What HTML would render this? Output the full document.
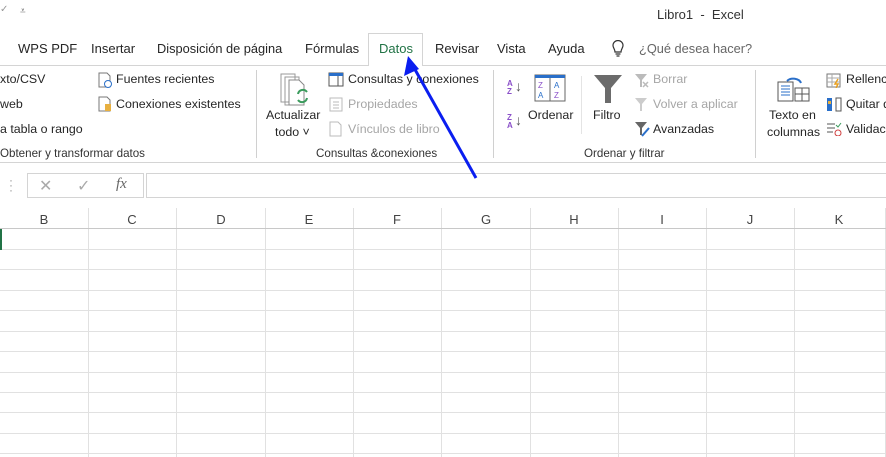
<!DOCTYPE html>
<html><head><meta charset="utf-8"><style>
*{margin:0;padding:0;box-sizing:border-box}
body{width:886px;height:457px;overflow:hidden;background:#fff;font-family:"Segoe UI","Liberation Sans",sans-serif;color:#262626;position:relative}
.a{position:absolute;white-space:nowrap}
.t{font-size:13px}
.r{font-size:12.4px}
.g{font-size:12px;color:#333}
.dis{color:#a6a6a6}
.vl{position:absolute;width:1px;background:#d0d0d0}
</style></head><body>
<div class="a" style="left:0;top:4px;font-size:10px;color:#999">✓</div>
<div class="a" style="left:20px;top:6px;font-size:10px;color:#666">⩡</div>
<div class="a t" style="left:657px;top:7px;color:#333">Libro1&nbsp; - &nbsp;Excel</div>
<!-- tabs -->
<div class="a t" style="left:18px;top:41px">WPS PDF</div>
<div class="a t" style="left:91px;top:41px">Insertar</div>
<div class="a t" style="left:157px;top:41px;font-size:12.8px">Disposición de página</div>
<div class="a t" style="left:305px;top:41px">Fórmulas</div>
<div style="position:absolute;left:368px;top:33px;width:55px;height:33px;border:1px solid #d4d4d4;border-bottom:none;background:#fff;z-index:2"></div>
<div class="a t" style="left:379px;top:41px;color:#217346;z-index:3">Datos</div>
<div class="a t" style="left:435px;top:41px">Revisar</div>
<div class="a t" style="left:497px;top:41px">Vista</div>
<div class="a t" style="left:548px;top:41px">Ayuda</div>
<svg class="a" style="left:610px;top:40px" width="16" height="18" viewBox="0 0 16 18"><path d="M5 12 C5 9 3 8 3 5.5 A5 5 0 0 1 13 5.5 C13 8 11 9 11 12 Z M5.5 14 H10.5 M6.5 16 H9.5" fill="none" stroke="#333" stroke-width="1.2"/></svg>
<div class="a t" style="left:639px;top:41px;color:#666;font-size:12.8px">¿Qué desea hacer?</div>
<div style="position:absolute;left:0;top:65px;width:886px;height:1px;background:#d4d4d4"></div>
<!-- ribbon -->
<div class="a r" style="left:0;top:72px">xto/CSV</div>
<div class="a r" style="left:0;top:97px">web</div>
<div class="a r" style="left:0;top:122px">a tabla o rango</div>
<svg class="a" style="left:97px;top:72px" width="16" height="16"><path d="M2 1h8l3 3v11H2z" fill="#fff" stroke="#777"/><circle cx="11" cy="12" r="3.5" fill="#fff" stroke="#2a6fc9"/></svg>
<div class="a r" style="left:116px;top:72px">Fuentes recientes</div>
<svg class="a" style="left:97px;top:96px" width="16" height="16"><path d="M2 1h8l3 3v11H2z" fill="#fff" stroke="#777"/><rect x="8" y="8" width="6" height="7" fill="#e8b040"/></svg>
<div class="a r" style="left:116px;top:97px">Conexiones existentes</div>
<div class="a g" style="left:0;top:147px;font-size:11.6px">Obtener y transformar datos</div>
<div class="vl" style="left:256px;top:70px;height:88px"></div>
<svg class="a" style="left:278px;top:72px" width="36" height="34"><path d="M3 2h14v28H3z M7 5h14v28H7z" fill="#fff" stroke="#999"/><path d="M11 8h10l5 5v20H11z" fill="#fff" stroke="#888"/><path d="M20 22a5 5 0 0 1 9-2M29 26a5 5 0 0 1-9 2" fill="none" stroke="#3a9b5c" stroke-width="2"/></svg>
<div class="a r" style="left:266px;top:108px">Actualizar</div>
<div class="a r" style="left:275px;top:125px">todo ˅</div>
<svg class="a" style="left:328px;top:72px" width="16" height="15"><rect x="1" y="1" width="14" height="13" fill="#fff" stroke="#555"/><rect x="1" y="1" width="14" height="3" fill="#2a6fc9"/><path d="M10 4v10" stroke="#555"/></svg>
<div class="a r" style="left:348px;top:72px">Consultas y conexiones</div>
<svg class="a" style="left:329px;top:97px" width="14" height="15"><rect x="1" y="1" width="12" height="13" fill="#fff" stroke="#bbb"/><path d="M4 5h6M4 8h6M4 11h6" stroke="#bbb"/></svg>
<div class="a r dis" style="left:348px;top:97px">Propiedades</div>
<svg class="a" style="left:329px;top:121px" width="14" height="16"><path d="M1 1h8l3 3v11H1z" fill="#fff" stroke="#bbb"/></svg>
<div class="a r dis" style="left:348px;top:122px">Vínculos de libro</div>
<div class="a g" style="left:316px;top:147px;font-size:11.6px">Consultas &amp;conexiones</div>
<div class="vl" style="left:493px;top:70px;height:88px"></div>
<div class="a" style="left:507px;top:80px;font-size:8px;line-height:8px;color:#8a4fc9;font-weight:bold">A<br>Z</div><div class="a" style="left:515px;top:78px;font-size:14px;color:#555">↓</div>
<div class="a" style="left:507px;top:114px;font-size:8px;line-height:8px;color:#8a4fc9;font-weight:bold">Z<br>A</div><div class="a" style="left:515px;top:112px;font-size:14px;color:#555">↓</div>
<svg class="a" style="left:534px;top:74px" width="32" height="28"><rect x="1" y="1" width="30" height="26" fill="#fff" stroke="#666"/><rect x="1" y="1" width="30" height="3" fill="#2a6fc9"/><path d="M16 4v23" stroke="#666"/><text x="4" y="14" font-size="8" fill="#8a4fc9" font-family="Liberation Sans">Z</text><text x="4" y="24" font-size="8" fill="#2a6fc9" font-family="Liberation Sans">A</text><text x="20" y="14" font-size="8" fill="#2a6fc9" font-family="Liberation Sans">A</text><text x="20" y="24" font-size="8" fill="#8a4fc9" font-family="Liberation Sans">Z</text></svg>
<div class="a r" style="left:528px;top:108px">Ordenar</div>
<div class="vl" style="left:581px;top:76px;height:58px;background:#e4e4e4"></div>
<svg class="a" style="left:593px;top:74px" width="30" height="30"><path d="M1 1h28L18 14v15h-6V14z" fill="#6b6b6b"/></svg>
<div class="a r" style="left:593px;top:108px">Filtro</div>
<svg class="a" style="left:634px;top:73px" width="16" height="15"><path d="M1 1h12L8 7v7H6V7z" fill="#bbb"/><path d="M9 9l5 5M14 9l-5 5" stroke="#bbb" stroke-width="1.5"/></svg>
<div class="a r dis" style="left:653px;top:72px">Borrar</div>
<svg class="a" style="left:634px;top:97px" width="16" height="15"><path d="M1 1h12L8 7v7H6V7z" fill="#ccc"/></svg>
<div class="a r dis" style="left:653px;top:97px">Volver a aplicar</div>
<svg class="a" style="left:634px;top:121px" width="16" height="16"><path d="M1 1h12L8 7v7H6V7z" fill="#666"/><path d="M8 15l7-8" stroke="#2a6fc9" stroke-width="2"/></svg>
<div class="a r" style="left:653px;top:122px">Avanzadas</div>
<div class="a g" style="left:584px;top:147px;font-size:11.6px">Ordenar y filtrar</div>
<div class="vl" style="left:755px;top:70px;height:88px"></div>
<svg class="a" style="left:777px;top:74px" width="34" height="28"><rect x="1" y="8" width="15" height="19" fill="#fff" stroke="#555"/><path d="M4 12h9M4 15h9M4 18h9M4 21h9" stroke="#2a6fc9"/><rect x="18" y="14" width="14" height="13" fill="#fff" stroke="#555"/><path d="M25 14v13M18 20h14" stroke="#555"/><path d="M10 7a8 6 0 0 1 14 2" fill="none" stroke="#2a6fc9" stroke-width="2"/></svg>
<div class="a r" style="left:769px;top:108px">Texto en</div>
<div class="a r" style="left:767px;top:125px">columnas</div>
<svg class="a" style="left:826px;top:73px" width="16" height="15"><rect x="1" y="1" width="13" height="13" fill="#fff" stroke="#777"/><path d="M1 5h13M1 9h13M6 1v13" stroke="#aaa"/><path d="M12 6l-3 5h3l-2 4" stroke="#e8a020" fill="none" stroke-width="1.5"/></svg>
<div class="a r" style="left:846px;top:72px">Rellenc</div>
<svg class="a" style="left:826px;top:97px" width="16" height="15"><rect x="1" y="1" width="5" height="13" fill="#2a6fc9"/><rect x="2" y="4" width="3" height="3" fill="#e8b040"/><rect x="10" y="1" width="5" height="13" fill="#fff" stroke="#555"/></svg>
<div class="a r" style="left:846px;top:97px">Quitar d</div>
<svg class="a" style="left:826px;top:121px" width="16" height="15"><path d="M1 3h8M1 7h8M1 11h6" stroke="#555"/><path d="M10 4l2 2 3-4" stroke="#3a9b5c" fill="none"/><circle cx="12" cy="12" r="3" fill="#fff" stroke="#d04040"/></svg>
<div class="a r" style="left:846px;top:122px">Validac</div>
<div style="position:absolute;left:0;top:162px;width:886px;height:1px;background:#d4d4d4"></div>
<!-- formula bar -->
<div class="a" style="left:9px;top:178px;font-size:12px;color:#999;line-height:5px">·<br>·<br>·</div>
<div style="position:absolute;left:27px;top:173px;width:117px;height:25px;border:1px solid #d4d4d4"></div>
<div class="a" style="left:39px;top:176px;font-size:16px;color:#aaa">✕</div>
<div class="a" style="left:77px;top:176px;font-size:16px;color:#aaa">✓</div>
<div class="a" style="left:116px;top:176px;font-size:15px;color:#666;font-family:'Liberation Serif',serif;font-style:italic">fx</div>
<div style="position:absolute;left:146px;top:173px;width:745px;height:25px;border:1px solid #d4d4d4"></div>
<!-- grid -->
<svg class="a" style="left:0;top:200px" width="886" height="257">
<g stroke="#e1e1e1" stroke-width="1">
<line x1="88.5" y1="8" x2="88.5" y2="257"/><line x1="176.5" y1="8" x2="176.5" y2="257"/><line x1="265.5" y1="8" x2="265.5" y2="257"/><line x1="353.5" y1="8" x2="353.5" y2="257"/><line x1="441.5" y1="8" x2="441.5" y2="257"/><line x1="530.5" y1="8" x2="530.5" y2="257"/><line x1="618.5" y1="8" x2="618.5" y2="257"/><line x1="706.5" y1="8" x2="706.5" y2="257"/><line x1="794.5" y1="8" x2="794.5" y2="257"/><line x1="885.5" y1="8" x2="885.5" y2="257"/>
<line x1="0" y1="49.5" x2="886" y2="49.5"/><line x1="0" y1="69.5" x2="886" y2="69.5"/><line x1="0" y1="90.5" x2="886" y2="90.5"/><line x1="0" y1="110.5" x2="886" y2="110.5"/><line x1="0" y1="131.5" x2="886" y2="131.5"/><line x1="0" y1="151.5" x2="886" y2="151.5"/><line x1="0" y1="172.5" x2="886" y2="172.5"/><line x1="0" y1="192.5" x2="886" y2="192.5"/><line x1="0" y1="212.5" x2="886" y2="212.5"/><line x1="0" y1="233.5" x2="886" y2="233.5"/><line x1="0" y1="253.5" x2="886" y2="253.5"/>
</g>
<line x1="0" y1="28.5" x2="886" y2="28.5" stroke="#c8c8c8"/>
<rect x="0" y="29" width="2" height="21" fill="#217346"/>
<g font-family="Liberation Sans" font-size="13" fill="#444" text-anchor="middle">
<text x="44" y="24">B</text><text x="132" y="24">C</text><text x="221" y="24">D</text><text x="309" y="24">E</text><text x="397" y="24">F</text><text x="486" y="24">G</text><text x="574" y="24">H</text><text x="662" y="24">I</text><text x="750" y="24">J</text><text x="839" y="24">K</text>
</g></svg>
<!-- arrow -->
<svg class="a" style="left:0;top:0;z-index:5" width="886" height="457"><line x1="476" y1="178" x2="413" y2="66" stroke="#0a1ef0" stroke-width="3"/><path d="M408 56 L404 76 L419 69 Z" fill="#0a1ef0"/></svg>
</body></html>
